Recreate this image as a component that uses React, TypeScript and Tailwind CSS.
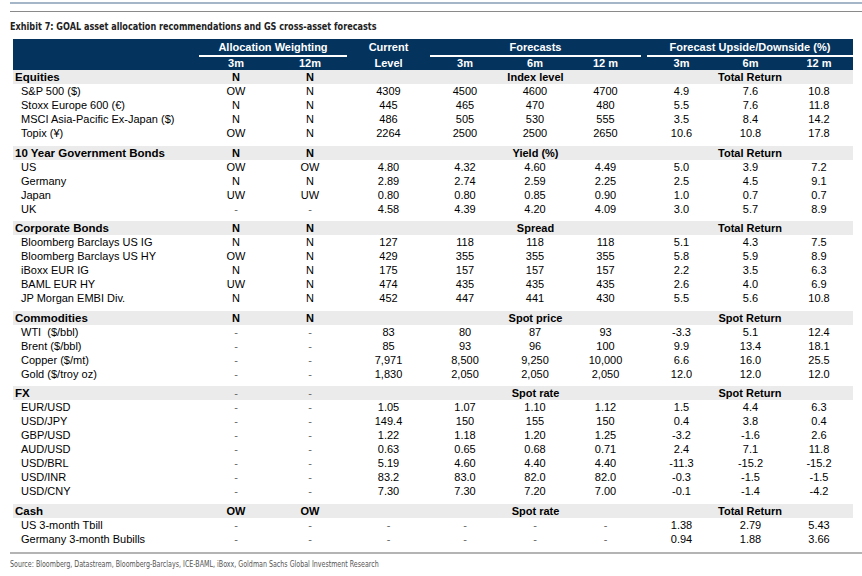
const cols = "grid grid-cols-[186px_74px_74px_83px_70px_70px_71px_6px_69px_69px_68px]";

type Row = { name: string; v: string[] };
type Section = { title: string; w3: string; w12: string; mid: string; right: string; rows: Row[] };

const sections: Section[] = [
  {
    title: "Equities", w3: "N", w12: "N", mid: "Index level", right: "Total Return",
    rows: [
      { name: "S&P 500 ($)", v: ["OW", "N", "4309", "4500", "4600", "4700", "4.9", "7.6", "10.8"] },
      { name: "Stoxx Europe 600 (€)", v: ["N", "N", "445", "465", "470", "480", "5.5", "7.6", "11.8"] },
      { name: "MSCI Asia-Pacific Ex-Japan ($)", v: ["N", "N", "486", "505", "530", "555", "3.5", "8.4", "14.2"] },
      { name: "Topix (¥)", v: ["OW", "N", "2264", "2500", "2500", "2650", "10.6", "10.8", "17.8"] },
    ],
  },
  {
    title: "10 Year Government Bonds", w3: "N", w12: "N", mid: "Yield (%)", right: "Total Return",
    rows: [
      { name: "US", v: ["OW", "OW", "4.80", "4.32", "4.60", "4.49", "5.0", "3.9", "7.2"] },
      { name: "Germany", v: ["N", "N", "2.89", "2.74", "2.59", "2.25", "2.5", "4.5", "9.1"] },
      { name: "Japan", v: ["UW", "UW", "0.80", "0.80", "0.85", "0.90", "1.0", "0.7", "0.7"] },
      { name: "UK", v: ["-", "-", "4.58", "4.39", "4.20", "4.09", "3.0", "5.7", "8.9"] },
    ],
  },
  {
    title: "Corporate Bonds", w3: "N", w12: "N", mid: "Spread", right: "Total Return",
    rows: [
      { name: "Bloomberg Barclays US IG", v: ["N", "N", "127", "118", "118", "118", "5.1", "4.3", "7.5"] },
      { name: "Bloomberg Barclays US HY", v: ["OW", "N", "429", "355", "355", "355", "5.8", "5.9", "8.9"] },
      { name: "iBoxx EUR IG", v: ["N", "N", "175", "157", "157", "157", "2.2", "3.5", "6.3"] },
      { name: "BAML EUR HY", v: ["UW", "N", "474", "435", "435", "435", "2.6", "4.0", "6.9"] },
      { name: "JP Morgan EMBI Div.", v: ["N", "N", "452", "447", "441", "430", "5.5", "5.6", "10.8"] },
    ],
  },
  {
    title: "Commodities", w3: "N", w12: "N", mid: "Spot price", right: "Spot Return",
    rows: [
      { name: "WTI  ($/bbl)", v: ["-", "-", "83", "80", "87", "93", "-3.3", "5.1", "12.4"] },
      { name: "Brent ($/bbl)", v: ["-", "-", "85", "93", "96", "100", "9.9", "13.4", "18.1"] },
      { name: "Copper ($/mt)", v: ["-", "-", "7,971", "8,500", "9,250", "10,000", "6.6", "16.0", "25.5"] },
      { name: "Gold ($/troy oz)", v: ["-", "-", "1,830", "2,050", "2,050", "2,050", "12.0", "12.0", "12.0"] },
    ],
  },
  {
    title: "FX", w3: "-", w12: "-", mid: "Spot rate", right: "Spot Return",
    rows: [
      { name: "EUR/USD", v: ["-", "-", "1.05", "1.07", "1.10", "1.12", "1.5", "4.4", "6.3"] },
      { name: "USD/JPY", v: ["-", "-", "149.4", "150", "155", "150", "0.4", "3.8", "0.4"] },
      { name: "GBP/USD", v: ["-", "-", "1.22", "1.18", "1.20", "1.25", "-3.2", "-1.6", "2.6"] },
      { name: "AUD/USD", v: ["-", "-", "0.63", "0.65", "0.68", "0.71", "2.4", "7.1", "11.8"] },
      { name: "USD/BRL", v: ["-", "-", "5.19", "4.60", "4.40", "4.40", "-11.3", "-15.2", "-15.2"] },
      { name: "USD/INR", v: ["-", "-", "83.2", "83.0", "82.0", "82.0", "-0.3", "-1.5", "-1.5"] },
      { name: "USD/CNY", v: ["-", "-", "7.30", "7.30", "7.20", "7.00", "-0.1", "-1.4", "-4.2"] },
    ],
  },
  {
    title: "Cash", w3: "OW", w12: "OW", mid: "Spot rate", right: "Total Return",
    rows: [
      { name: "US 3-month Tbill", v: ["-", "-", "-", "-", "-", "-", "1.38", "2.79", "5.43"] },
      { name: "Germany 3-month Bubills", v: ["-", "-", "-", "-", "-", "-", "0.94", "1.88", "3.66"] },
    ],
  },
];

const Cell = ({ t }: { t: string }) => (
  <div className={t === "-" ? "text-center text-[#666]" : "text-center"}>{t}</div>
);

const SectionBlock = ({ s, last }: { s: Section; last: boolean }) => (
  <div>
    <div className={`${cols} h-[14px] items-center bg-[#ebebeb] font-bold leading-[14px]`}>
      <div className="pl-[2px] text-[11.5px]">{s.title}</div>
      <div className={s.w3 === "-" ? "text-center font-normal text-[#666]" : "text-center"}>{s.w3}</div>
      <div className={s.w12 === "-" ? "text-center font-normal text-[#666]" : "text-center"}>{s.w12}</div>
      <div />
      <div className="col-span-3 text-center">{s.mid}</div>
      <div />
      <div className="col-span-3 text-center">{s.right}</div>
    </div>
    {s.rows.map((r) => (
      <div key={r.name} className={`${cols} h-[14px] items-center leading-[14px]`}>
        <div className="pl-[8px] whitespace-pre">{r.name}</div>
        <Cell t={r.v[0]} />
        <Cell t={r.v[1]} />
        <Cell t={r.v[2]} />
        <Cell t={r.v[3]} />
        <Cell t={r.v[4]} />
        <Cell t={r.v[5]} />
        <div />
        <Cell t={r.v[6]} />
        <Cell t={r.v[7]} />
        <Cell t={r.v[8]} />
      </div>
    ))}
    {!last && <div className="h-[5.6px]" />}
  </div>
);

export default function App() {
  return (
    <div className="w-[862px] h-[576px] bg-white text-black font-['Liberation_Sans',Arial,sans-serif] text-[11px]">
      <div className="pt-[2px] pl-[10px]">
        <div className="h-[2px] bg-[#a5b6c8]" />
        <div className="mt-[7px] h-[1px] bg-[#8a8a8a]" />
        <div className="mt-[9px] h-[12px] leading-[12px] text-[11px] font-bold text-[#222] whitespace-nowrap origin-left scale-x-[0.82] font-['Liberation_Sans_Narrow','DejaVu_Sans_Condensed',sans-serif]">
          Exhibit 7: GOAL asset allocation recommendations and GS cross-asset forecasts
        </div>
      </div>

      <div className="mt-[6px] ml-[13px] w-[840px]">
        {/* header */}
        <div className={`${cols} bg-[#04335e] font-bold text-white`}>
          <div />
          <div className="col-span-2 h-[18px] border-b-2 border-white text-center leading-[16px]">Allocation Weighting</div>
          <div className="h-[18px] text-center leading-[17px]">Current</div>
          <div className="col-span-3 h-[18px] border-b-2 border-white text-center leading-[16px]">Forecasts</div>
          <div />
          <div className="col-span-3 h-[18px] border-b-2 border-white text-center leading-[16px]">Forecast Upside/Downside (%)</div>

          <div />
          <div className="h-[13px] text-center leading-[13px]">3m</div>
          <div className="h-[13px] text-center leading-[13px]">12m</div>
          <div className="h-[13px] text-center leading-[13px]">Level</div>
          <div className="h-[13px] text-center leading-[13px]">3m</div>
          <div className="h-[13px] text-center leading-[13px]">6m</div>
          <div className="h-[13px] text-center leading-[13px]">12 m</div>
          <div />
          <div className="h-[13px] text-center leading-[13px]">3m</div>
          <div className="h-[13px] text-center leading-[13px]">6m</div>
          <div className="h-[13px] text-center leading-[13px]">12 m</div>
        </div>

        {sections.map((s, i) => (
          <SectionBlock key={s.title} s={s} last={i === sections.length - 1} />
        ))}
      </div>

      <div className="pl-[10px] mt-[6px]">
        <div className="h-[2px] bg-[#b4b4b4]" />
        <div className="mt-[6px] text-[8px] leading-[10px] text-[#555] whitespace-nowrap origin-left scale-x-[0.88] font-['Liberation_Sans_Narrow','DejaVu_Sans_Condensed',sans-serif]">
          Source: Bloomberg, Datastream, Bloomberg-Barclays, ICE-BAML, iBoxx, Goldman Sachs Global Investment Research
        </div>
      </div>
    </div>
  );
}
